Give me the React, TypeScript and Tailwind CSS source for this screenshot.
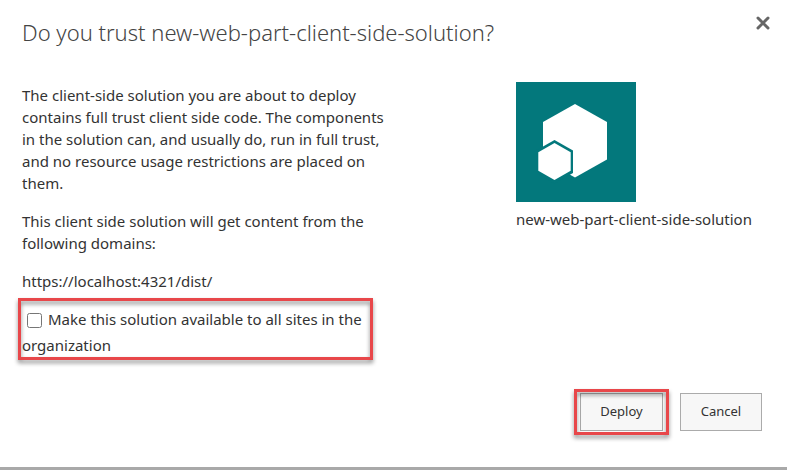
import React, { useState } from 'react';

interface Props {
  name: string;
  domains: string[];
}

const SolutionIcon: React.FC = () => (
  <svg viewBox="0 0 120 120" className="block size-[120px] bg-[#03787c]" aria-hidden="true">
    <path d="M59 22 91 40V77.500L59 95.500 27 77.500V40Z" fill="#fff" />
    <path d="M38.500 58 57 68.500V91L38.500 101.500 20 91V68.500Z" fill="#03787c" />
    <path d="M38.500 61 54.700 70.300V88.700L38.500 98 22.300 88.700V70.300Z" fill="#fff" />
  </svg>
);

// Red frame drawn over the control it points at
const Highlight: React.FC<{ className: string }> = ({ className }) => (
  <span
    className={`pointer-events-none absolute border-3 border-[#e8474a] drop-shadow-[0_3px_2px_rgba(0,0,0,0.45)] ${className}`}
  />
);

const TrustDialog: React.FC<Props> = ({ name, domains }) => {
  const [tenantWide, setTenantWide] = useState(false);

  return (
    <div
      role="dialog"
      aria-labelledby="trust-title"
      className="flex min-h-screen flex-col border-b-3 border-[#a9a9a9] bg-white pr-[25px] pl-[22px] font-['Noto_Sans','Open_Sans',sans-serif] text-[#333]"
    >
      <header className="flex items-start justify-between pt-4">
        <h1 id="trust-title" className="text-[22px] leading-8 font-light text-[#444]">
          Do you trust {name}?
        </h1>
        <button type="button" aria-label="Close" className="-mr-2 text-[#666]">
          <svg viewBox="0 0 14 14" className="block size-[14px]" stroke="currentColor" strokeWidth="3" strokeLinecap="round">
            <path d="M2 2 12 12M12 2 2 12" />
          </svg>
        </button>
      </header>

      <main className="flex items-start justify-between gap-8 pt-[34px] text-[15px] leading-[22px]">
        <div className="max-w-[374px] space-y-4 pt-0.5">
          <p>
            The client-side solution you are about to deploy contains full trust client side code. The
            components in the solution can, and usually do, run in full trust, and no resource usage
            restrictions are placed on them.
          </p>
          <p>This client side solution will get content from the following domains:</p>
          <div>
            {domains.map((domain) => (
              <p key={domain}>{domain}</p>
            ))}
            <div className="relative mt-3.5 max-w-[347px] leading-[26px]">
              <label>
                <input
                  type="checkbox"
                  checked={tenantWide}
                  onChange={(e) => setTenantWide(e.target.checked)}
                  className="mr-1.5 ml-[5px] size-[15px] align-middle"
                />
                Make this solution available to all sites in the organization
              </label>
              <Highlight className="-inset-x-1 -top-2 -bottom-0.5" />
            </div>
          </div>
        </div>

        <figure className="w-[246px]">
          <SolutionIcon />
          <figcaption className="pt-1.5">{name}</figcaption>
        </figure>
      </main>

      <footer className="mt-auto flex justify-end gap-[17px] pb-9 text-[13px]">
        <div className="relative">
          <button type="button" className="h-[38px] w-[83px] border border-[#ababab] bg-[#f7f7f7]">
            Deploy
          </button>
          <Highlight className="-inset-x-1.5 -top-1 -bottom-1" />
        </div>
        <button type="button" className="h-[38px] w-[82px] border border-[#ababab] bg-[#f7f7f7]">
          Cancel
        </button>
      </footer>
    </div>
  );
};

const App: React.FC = () => (
  <TrustDialog name="new-web-part-client-side-solution" domains={['https://localhost:4321/dist/']} />
);

export default App;
